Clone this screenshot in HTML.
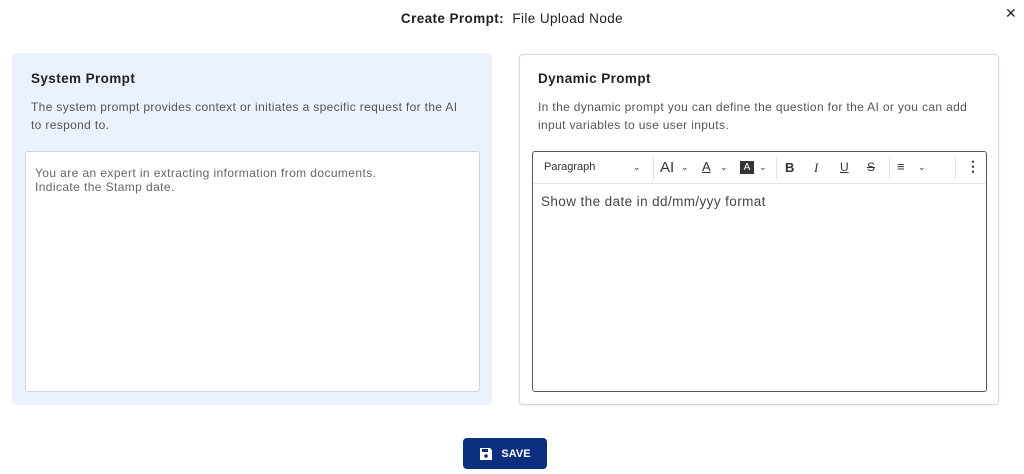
<!DOCTYPE html>
<html><head><style>
*{box-sizing:border-box;margin:0;padding:0}
body{width:1024px;height:474px;background:#fff;font-family:"Liberation Sans",sans-serif;position:relative;overflow:hidden;color:#222}
.title{position:absolute;top:11px;left:0;width:1024px;text-align:center;font-size:13.5px;letter-spacing:.4px;color:#222}
.title b{font-weight:700}
.x{position:absolute;left:1005px;top:5px;font-size:14px;color:#222}
.panel{position:absolute;border-radius:4px}
.l{left:12px;top:53px;width:480px;height:352px;background:#ebf1fd}
.r{left:519px;top:54px;width:480px;height:351px;background:#fff;border:1px solid #d6d8dc;box-shadow:0 1px 2px rgba(0,0,0,.08)}
h3{position:absolute;left:19px;top:18px;font-size:13.5px;letter-spacing:.4px;font-weight:700;color:#222}
.r h3{left:18px;top:16px}
.desc{position:absolute;left:19px;top:45px;width:436px;font-size:12px;letter-spacing:.35px;line-height:18px;color:#555}
.r .desc{left:18px;top:43px;width:445px}
.ta{position:absolute;left:25px;top:151px;width:455px;height:241px;background:#fff;border:1px solid #d2d4d8;border-radius:3px;padding:14px 9px;font-size:12px;letter-spacing:.4px;line-height:14px;color:#666}
.ed{position:absolute;left:532px;top:151px;width:455px;height:241px;border:1px solid #555;border-radius:3px;background:#fff}
.tb{height:32px;border-bottom:1px solid #e4e4e4;position:relative;font-size:11px;color:#333}
.tb span{position:absolute;top:9px}
.sep{position:absolute;top:5px;width:1px;height:22px;background:#e0e0e0}
.content{padding:10px 8px;font-size:13.5px;letter-spacing:.4px;color:#444}
.save{position:absolute;left:463px;top:438px;width:84px;height:31px;background:#0b2e7e;border-radius:4px;color:#fff;font-size:11px;font-weight:700;display:flex;align-items:center;justify-content:center;gap:8px}
</style></head><body>
<div class="title"><b>Create Prompt:</b>&nbsp; File Upload Node</div>
<div class="x">✕</div>
<div class="panel l"><h3>System Prompt</h3><div class="desc">The system prompt provides context or initiates a specific request for the AI to respond to.</div></div>
<div class="ta">You are an expert in extracting information from documents.<br>Indicate the Stamp date.</div>
<div class="panel r"><h3>Dynamic Prompt</h3><div class="desc">In the dynamic prompt you can define the question for the AI or you can add input variables to use user inputs.</div></div>
<div class="ed">
<div class="tb">
<span style="left:11px">Paragraph</span>
<span style="left:100px;font-size:9px;top:10px">⌄</span>
<div class="sep" style="left:120px"></div>
<span style="left:127px;font-size:15px;top:7px">AI</span><span style="left:148px;font-size:9px;top:10px">⌄</span>
<span style="left:169px;font-size:13px;top:7px;text-decoration:underline">A</span><span style="left:187px;font-size:9px;top:10px">⌄</span>
<span style="left:207px;top:9px;width:14px;height:13px;background:#333;color:#fff;font-size:10px;text-align:center;line-height:13px">A</span><span style="left:226px;font-size:9px;top:10px">⌄</span>
<div class="sep" style="left:243px"></div>
<span style="left:252px;font-size:13px;top:8px;font-weight:700">B</span>
<span style="left:281px;font-size:13px;top:8px;font-style:italic;font-family:'Liberation Serif',serif">I</span>
<span style="left:307px;font-size:12px;top:8px;text-decoration:underline">U</span>
<span style="left:334px;font-size:12px;top:8px;text-decoration:line-through">S</span>
<div class="sep" style="left:356px"></div>
<span style="left:364px;font-size:13px;top:7px">≡</span><span style="left:385px;font-size:9px;top:10px">⌄</span>
<div class="sep" style="left:422px"></div>
<span style="left:433px;font-size:14px;top:6px;font-weight:700">⋮</span>
</div>
<div class="content">Show the date in dd/mm/yyy format</div>
</div>
<div class="save"><svg width="14" height="14" viewBox="0 0 14 14"><path d="M1 1h10l2 2v10H1z" fill="#fff"/><rect x="3" y="2" width="6" height="3" fill="#0b2e7e"/><circle cx="7" cy="9" r="1.8" fill="#0b2e7e"/></svg>SAVE</div>
</body></html>
